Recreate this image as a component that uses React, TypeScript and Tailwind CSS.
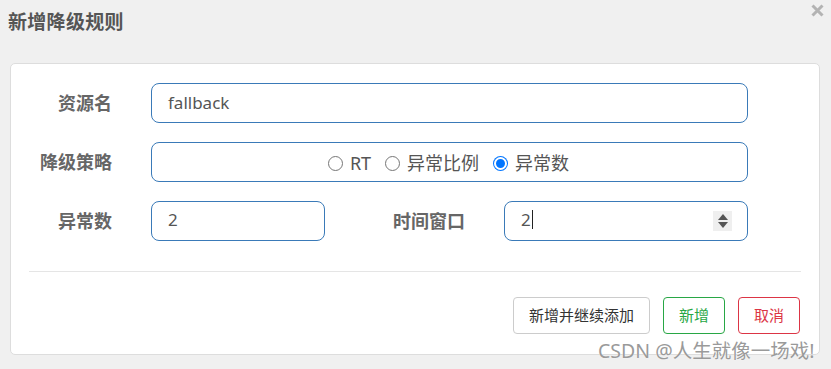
import React from "react";

const FONT = { fontFamily: '"Noto Sans", "Noto Sans CJK SC", sans-serif' };

function Radio({ label, checked }: { label: string; checked?: boolean }) {
  return (
    <span className="flex items-center gap-[7px]">
      {checked ? (
        <span className="w-[15px] h-[15px] rounded-full bg-[#0075ff] flex items-center justify-center">
          <span className="w-[9px] h-[9px] rounded-full bg-[#0075ff] border-[2px] border-white box-content" />
        </span>
      ) : (
        <span className="w-[15px] h-[15px] rounded-full border border-[#767676] bg-white" />
      )}
      <span>{label}</span>
    </span>
  );
}

export default function App() {
  return (
    <div
      className="relative w-[831px] h-[369px] bg-[#f0f0f0] overflow-hidden"
      style={FONT}
    >
      {/* Header */}
      <div className="flex items-start justify-between h-[63px]">
        <h1 className="ml-[8px] mt-[8px] text-[19px] font-bold text-[#555] tracking-[0.3px]">
          新增降级规则
        </h1>
        <svg className="mr-[7px] mt-[4px]" width="13" height="13" viewBox="0 0 13 13">
          <path d="M1.5 1.5L11.5 11.5M11.5 1.5L1.5 11.5" stroke="#b3b3b3" strokeWidth="3" />
        </svg>
      </div>

      {/* Card */}
      <div className="mx-[10px] w-[810px] h-[292px] bg-white border border-[#dddddd] rounded-[5px] pt-[19px]">
        <div className="flex flex-col gap-[19px]">
          <div className="flex items-center">
            <label className="w-[101px] text-right text-[18px] font-bold text-[#666]">
              资源名
            </label>
            <div className="ml-[39px] w-[597px] h-[40px] rounded-[8px] border border-[#3a7ab8] flex items-center pl-[16px] text-[17px] text-[#555]">
              fallback
            </div>
          </div>

          <div className="flex items-center">
            <label className="w-[101px] text-right text-[18px] font-bold text-[#666]">
              降级策略
            </label>
            <div className="ml-[39px] w-[597px] h-[40px] rounded-[8px] border border-[#3a7ab8] flex items-center justify-center gap-[14px] pt-[3px] pr-[2px] text-[18px] text-[#555]">
              <Radio label="RT" />
              <Radio label="异常比例" />
              <Radio label="异常数" checked />
            </div>
          </div>

          <div className="flex items-center">
            <label className="w-[101px] text-right text-[18px] font-bold text-[#666]">
              异常数
            </label>
            <div className="ml-[39px] w-[174px] h-[40px] rounded-[8px] border border-[#3a7ab8] flex items-center pl-[16px] text-[17px] text-[#555] pb-[3px]">
              2
            </div>
            <label className="w-[140px] text-right text-[18px] font-bold text-[#666]">
              时间窗口
            </label>
            <div className="ml-[39px] w-[244px] h-[40px] rounded-[8px] border border-[#3a7ab8] flex items-center justify-between pl-[16px] pr-[15px] text-[17px] text-[#555]">
              <span className="flex items-center pb-[3px]">
                2<span className="ml-[1px] w-px h-[19px] bg-[#222]" />
              </span>
              <span className="w-[19px] h-[20px] bg-[#efefef] flex flex-col items-center justify-center gap-[2px]">
                <svg width="10" height="6" viewBox="0 0 10 6">
                  <path d="M5 0L10 6H0z" fill="#555" />
                </svg>
                <svg width="10" height="6" viewBox="0 0 10 6">
                  <path d="M0 0H10L5 6z" fill="#555" />
                </svg>
              </span>
            </div>
          </div>
        </div>

        <div className="mx-[18px] mt-[30px] border-t border-[#e5e5e5]" />

        <div className="flex justify-end gap-[13px] mt-[25px] mr-[19px]">
          <button className="w-[137px] h-[37px] rounded-[4px] border border-[#cccccc] text-[15px] text-[#333]">
            新增并继续添加
          </button>
          <button className="w-[62px] h-[37px] rounded-[4px] border border-[#28a745] text-[15px] text-[#28a745]">
            新增
          </button>
          <button className="w-[62px] h-[37px] rounded-[4px] border border-[#dc3545] text-[15px] text-[#dc3545]">
            取消
          </button>
        </div>
      </div>

      {/* Watermark */}
      <div
        className="absolute left-[598px] top-[336px] text-[19.5px] text-[#9a9a9a] whitespace-nowrap"
        style={{ textShadow: "0 0 1px #fff" }}
      >
        CSDN @人生就像一场戏!
      </div>
    </div>
  );
}
